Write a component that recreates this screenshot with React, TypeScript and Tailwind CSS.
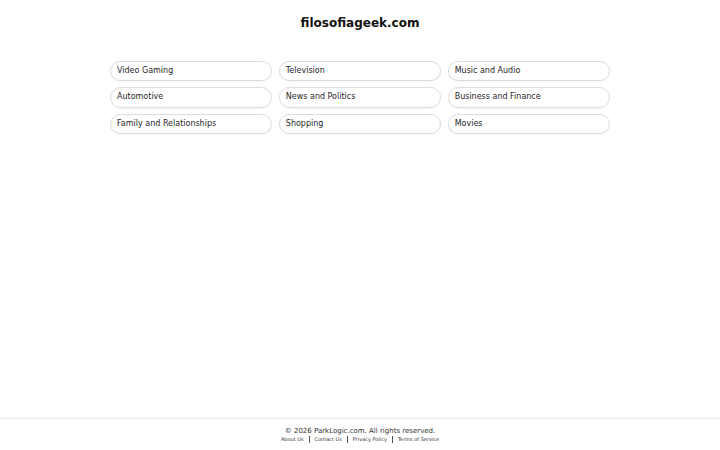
import React from "react";

const topics = [
  "Video Gaming",
  "Television",
  "Music and Audio",
  "Automotive",
  "News and Politics",
  "Business and Finance",
  "Family and Relationships",
  "Shopping",
  "Movies",
];

const links = ["About Us", "Contact Us", "Privacy Policy", "Terms of Service"];

export default function App() {
  return (
    <div
      className="flex h-[450px] w-full flex-col bg-white text-[#222]"
      style={{ fontFamily: '"DejaVu Sans", sans-serif' }}
    >
      <main className="flex-1">
        <h1 className="pt-[15px] text-center text-[12px] font-bold leading-[16px] text-[#111]">
          filosofiageek.com
        </h1>
        <div className="mx-auto mt-[29.5px] grid w-[500px] grid-cols-3 gap-x-[6.5px] gap-y-[6px]">
          {topics.map((t) => (
            <a
              key={t}
              href="#"
              className="flex h-[20.5px] items-center rounded-full border border-[#dcdcdc] px-[6px] text-[8px] text-[#1f1f1f] shadow-[0_1px_1px_rgba(0,0,0,0.04)]"
            >
              {t}
            </a>
          ))}
        </div>
      </main>
      <footer className="h-[32px] border-t border-[#ececec] pt-[7px] text-center shadow-[0_-1px_2px_rgba(0,0,0,0.03)]">
        <p className="text-[7px] leading-[10px] text-[#333]">
          © 2026 ParkLogic.com. All rights reserved.
        </p>
        <div className="flex items-center justify-center text-[5px] leading-[7px] text-[#333]">
          {links.map((l, i) => (
            <React.Fragment key={l}>
              {i > 0 && <span className="mx-[5px] h-[7px] w-px bg-[#555]" />}
              <a href="#">{l}</a>
            </React.Fragment>
          ))}
        </div>
      </footer>
    </div>
  );
}
